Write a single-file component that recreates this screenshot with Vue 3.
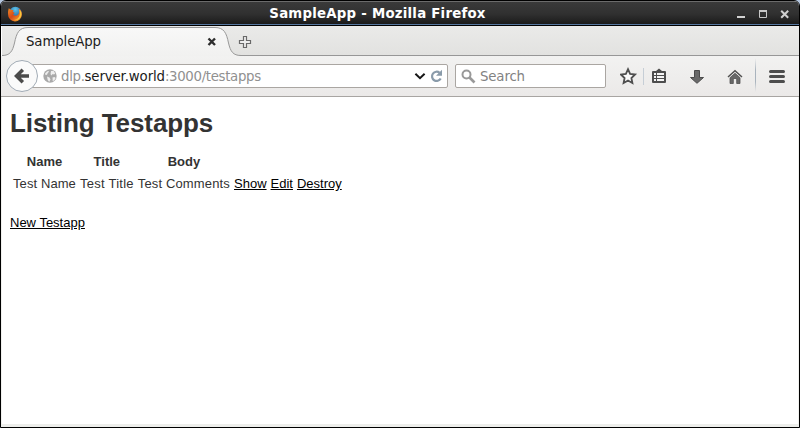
<script setup>
const page = {
  title: 'Listing Testapps',
  headers: ['Name', 'Title', 'Body'],
  rows: [{ name: 'Test Name', title: 'Test Title', body: 'Test Comments' }],
  actions: ['Show', 'Edit', 'Destroy'],
}
</script>

<template>
  <div class="window">
    <header class="titlebar">
      <svg class="logo" width="16" height="16" viewBox="0 0 16 16">
        <defs>
          <linearGradient id="fox" x1="0" y1="0" x2="1" y2="1">
            <stop offset="0" stop-color="#f08a20" />
            <stop offset=".45" stop-color="#d84a18" />
            <stop offset="1" stop-color="#f7b733" />
          </linearGradient>
          <radialGradient id="globe" cx=".5" cy=".2" r=".8">
            <stop offset="0" stop-color="#5cc4ec" />
            <stop offset="1" stop-color="#174a86" />
          </radialGradient>
        </defs>
        <circle cx="8.3" cy="7.2" r="6.4" fill="url(#globe)" />
        <path d="M1.8 2.2 4 3.7 6.6 4.2 5.8 5.8 7.8 7 6 8.3C7 10 9.3 10.2 11 8.8 12.8 7 12.4 4.5 11.6 2.8 14 4 15.2 6.2 14.9 8.8A6.9 6.9 0 0 1 1.1 8.4C.9 6 1.1 4 1.8 2.2Z" fill="url(#fox)" />
        <path d="M12.2 3.3C14.5 5 15 8 13.8 10.8 12.5 13.5 9.5 14.8 7 14 10.5 13.8 12.8 11 12.8 7.5Z" fill="#fbc83c" />
      </svg>
      <div class="window-title">SampleApp - Mozilla Firefox</div>
      <svg class="controls" width="54" height="12" viewBox="0 0 54 12">
        <path d="M1 9h8v2H1z" fill="#d2d2d2" />
        <path d="M23.5 4.500h7v6h-7z" fill="none" stroke="#c8c8c8" />
        <path d="M23 3h8v2h-8z" fill="#c8c8c8" />
        <path d="m45.200 3.700 7 7m0-7-7 7" stroke="#d0d0d0" stroke-width="2" />
      </svg>
    </header>

    <div class="tabs">
      <svg class="tab-shape" width="258" height="30" viewBox="0 0 258 30">
        <defs>
          <linearGradient id="tabfill" x1="0" y1="0" x2="0" y2="1">
            <stop offset="0" stop-color="#f8f8f8" />
            <stop offset="1" stop-color="#f1f1f0" />
          </linearGradient>
        </defs>
        <path d="M0 30V29.5C8 29.5 10.5 25.5 12.5 17 14.5 7 17 1.5 26 1.5H213C222 1.5 224.500 7 226.500 17 228.500 25.500 231 29.500 239 29.500V30Z" fill="url(#tabfill)" />
        <path d="M0 29.500C8 29.500 10.500 25.500 12.500 17 14.500 7 17 1.500 26 1.500H213C222 1.500 224.500 7 226.500 17 228.500 25.500 231 29.500 239 29.500H258" fill="none" stroke="#989898" />
        <path d="m206.500 12.500 6.500 6.500m0-6.500-6.500 6.500" stroke="#2e2e2e" stroke-width="2.400" />
        <path d="M241.500 10.500h3v4h4v3h-4v4h-3v-4h-4v-3h4z" fill="#eee" stroke="#696969" stroke-width="1.200" />
      </svg>
      <span class="tab-title">SampleApp</span>
    </div>

    <nav class="toolbar">
      <svg class="back" width="34" height="34" viewBox="0 0 34 34">
        <circle cx="17" cy="17" r="15.500" fill="#fafafa" stroke="#a1abb5" />
        <path d="M24 17H12.500M17.800 10.800 11.500 17l6.300 6.200" fill="none" stroke="#4b4b4b" stroke-width="3.500" />
      </svg>
      <div class="address">
        <svg width="14" height="14" viewBox="0 0 14 14">
          <circle cx="7" cy="7" r="6.700" fill="#a9a9a9" />
          <path d="M2 4.500 4.300 2.200 6 2 5.500 3.300 4.500 4.500 4 5.800 2.500 6ZM8 2l2.500-.3L12.300 4.500 11 5.500 9.500 5 8.800 6.500 7.500 5.300ZM4 7.500l2.500 1 1 2-1.300 2.500-1.500-2ZM9.500 8.500l2-.6 1.200 1-1.500 2.500-1.500.5Z" fill="#eee" />
        </svg>
        <span class="url">dlp.<b>server.world</b>:3000/testapps</span>
        <svg class="address-tools" width="30" height="16" viewBox="0 0 30 16">
          <path d="m2.400 5.800 4.600 4.400L11.600 5.800" fill="none" stroke="#161616" stroke-width="2" />
          <path d="M27.700 10.500A4.600 4.600 0 1 1 26.600 4.800" fill="none" stroke="#8a9baa" stroke-width="2.200" />
          <path d="M29 1.800v6h-6z" fill="#8a9baa" />
        </svg>
      </div>
      <div class="search">
        <svg width="15" height="15" viewBox="0 0 15 15">
          <circle cx="5.500" cy="5.500" r="4" fill="none" stroke="#999" stroke-width="2" />
          <path d="m8.500 8.500 5 5" stroke="#999" stroke-width="2.600" />
        </svg>
        <span>Search</span>
      </div>
      <svg class="tools" width="178" height="38" viewBox="0 0 178 38">
        <defs>
          <linearGradient id="sep" x1="0" y1="0" x2="0" y2="1">
            <stop offset="0" stop-color="#b5bdc5" stop-opacity="0" />
            <stop offset=".35" stop-color="#a9b3bd" />
            <stop offset=".7" stop-color="#a9b3bd" />
            <stop offset="1" stop-color="#b5bdc5" stop-opacity="0" />
          </linearGradient>
        </defs>
        <path d="m8 12.200 2.100 4.700 5 .6-3.700 3.500 1 5L8 23.500 3.600 26l1-5L.9 17.500l5-.6z" fill="#fafafa" stroke="#505050" stroke-width="1.800" />
        <path d="M23 11h1v17h-1z" fill="#c6ced6" />
        <path d="M33 14h3l3-2.500 3 2.500h3q1 0 1 1v10q0 1-1 1H33q-1 0-1-1V15q0-1 1-1z" fill="#4d4d4d" />
        <path d="M34 16h2v2h-2zm3 0h7v2h-7zm-3 3h2v2h-2zm3 0h7v2h-7zm-3 3h2v2h-2zm3 0h7v2h-7z" fill="#f4f4f4" />
        <path d="M74.500 13.500h5v7h4L77 26.300l-6.500-5.800h4z" fill="#696969" stroke="#4b4b4b" />
        <path d="m108 20 7-6.300 7 6.300" fill="none" stroke="#505050" stroke-width="1.500" />
        <path d="M110 20.700 115 16.300l5 4.400V26.500h-3.300v-5h-3.400v5H110z" fill="#686868" stroke="#505050" stroke-width=".8" />
        <path d="M135 1h1v34h-1z" fill="url(#sep)" />
        <path d="M150.500 14.500h13M150.500 19.500h13M150.500 24.500h13" stroke="#4d4d4d" stroke-width="3" stroke-linecap="round" />
      </svg>
    </nav>

    <main class="content">
      <h1>{{ page.title }}</h1>
      <table>
        <thead>
          <tr>
            <th v-for="h in page.headers" :key="h">{{ h }}</th>
            <th colspan="3"></th>
          </tr>
        </thead>
        <tbody>
          <tr v-for="r in page.rows" :key="r.name">
            <td class="name">{{ r.name }}</td>
            <td class="title">{{ r.title }}</td>
            <td class="body">{{ r.body }}</td>
            <td v-for="a in page.actions" :key="a"><a href="#">{{ a }}</a></td>
          </tr>
        </tbody>
      </table>
      <a class="new" href="#">New Testapp</a>
    </main>
    <div class="bottom"></div>
  </div>
</template>

<style>
body { background: #b4c6df; overflow: hidden; }
</style>

<style scoped>
.window {
  box-sizing: border-box;
  width: 800px;
  height: 428px;
  display: flex;
  flex-direction: column;
  border: 1px solid #000;
  border-radius: 6px 6px 0 0;
  overflow: hidden;
  background: #fff;
  font-family: "DejaVu Sans", sans-serif;
}
.titlebar {
  box-sizing: border-box;
  flex: 0 0 25px;
  display: flex;
  align-items: center;
  padding: 0 9px 0 6px;
  border-top: 1px solid #6b6b6b;
  background: linear-gradient(#3a3a3a, #303030 50%, #1d1d1d 21px, #1a1a1a 22px, #56779f 22px, #56779f 23px, #000 23px);
}
.logo { display: block; margin-top: -1px; }
.window-title {
  flex: 1;
  padding-right: 4px;
  margin-top: -1px;
  text-align: center;
  font-weight: bold;
  font-size: 13.33px;
  letter-spacing: .23px;
  line-height: 20px;
  color: #fff;
}
.controls { display: block; margin-top: -2px; }
.tabs {
  flex: 0 0 30px;
  display: grid;
  margin-left: 1px;
  background: linear-gradient(#eaeae9, #e2e2e0 29px, #979797 29px);
}
.tab-shape, .tab-title { grid-area: 1 / 1; }
.tab-shape { display: block; }
.tab-title { padding: 7px 0 0 24px; font-size: 13.33px; letter-spacing: -.12px; line-height: 18px; color: #1c1c1c; }
.toolbar {
  box-sizing: border-box;
  flex: 0 0 41px;
  display: flex;
  align-items: center;
  padding-left: 4px;
  border-bottom: 1px solid #a8a5a2;
  background: linear-gradient(#f2f2f1, #ebe9e8);
}
.back { display: block; z-index: 1; }
.address, .search {
  box-sizing: border-box;
  height: 24px;
  display: flex;
  align-items: center;
  border: 1px solid #aaa6a2;
  border-radius: 2px;
  background: #fff;
  font-size: 13.33px;
  line-height: 18px;
}
.address { width: 418px; margin-left: -9px; padding: 0 4px 0 12px; }
.url { flex: 1; padding: 2px 0 0 4px; letter-spacing: -.33px; color: #909090; }
.url b { font-weight: normal; letter-spacing: -.13px; color: #1c1c1c; }
.search { width: 151px; margin-left: 7px; padding-left: 5px; color: #828282; }
.search span { padding: 2px 0 0 4px; letter-spacing: -.15px; }
.tools { display: block; margin-left: 14px; }
.content {
  flex: 1;
  padding: 9px 8px 0;
  border: solid #f1f1ee;
  border-width: 0 1px;
  font: 13px/18px "Liberation Sans", sans-serif;
  color: #333;
}
h1 { margin: 0 0 10px; font-size: 26px; letter-spacing: -.09px; line-height: 34px; }
table { border-spacing: 2px; }
th, td { padding: 1px; line-height: 18px; white-space: nowrap; }
.name { letter-spacing: .09px; }
.title { letter-spacing: .25px; }
.body { letter-spacing: .15px; }
a { color: #000; }
.new { display: inline-block; margin-top: 18px; }
.bottom { flex: 0 0 3px; background: #edeeeb; }
</style>
